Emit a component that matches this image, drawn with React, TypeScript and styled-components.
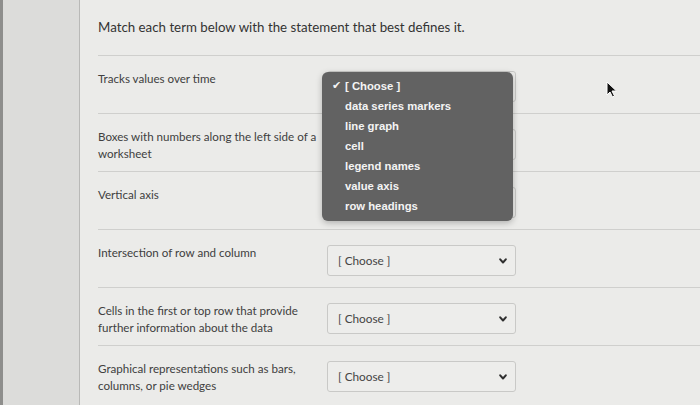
import React from 'react';
import styled, {createGlobalStyle} from 'styled-components';

const GlobalStyle = createGlobalStyle`
  html, body {
    margin: 0;
    padding: 0;
    background: #dcdcda;
    font-family: Lato, "Open Sans", sans-serif;
  }
`;

const Page = styled.div`
  position: relative;
  display: flex;
  width: 700px;
  height: 405px;
  overflow: hidden;
`;

const Sidebar = styled.div`
  width: 76px;
  flex-shrink: 0;
  background: #dcdcda;
  border-left: 3px solid #8e8e8c;
  border-right: 1px solid #b9b9b7;
`;

const Panel = styled.div`
  flex: 1;
  background: #ebebe9;
  padding-left: 18px;
`;

const Title = styled.div`
  height: 55px;
  box-sizing: border-box;
  padding-top: 19px;
  font-size: 13.3px;
  color: #333;
`;

const Row = styled.div`
  display: grid;
  grid-template-columns: 224px 189px;
  column-gap: 5px;
  align-items: start;
  box-sizing: border-box;
  height: 58px;
  padding-top: 14px;
  border-top: 1px solid #cfcfcd;
`;

const Label = styled.div`
  font-size: 11.6px;
  line-height: 17px;
  color: #404040;
`;

const SelectBox = styled.div`
  position: relative;
  display: flex;
  align-items: center;
  justify-content: space-between;
  box-sizing: border-box;
  height: 31px;
  margin-top: 1px;
  padding: 0 8px 0 10px;
  border: 1px solid #c9c9c7;
  border-radius: 3px;
  background: #ededeb;
  font-size: 11.8px;
  color: #454545;
`;

const Popup = styled.div`
  position: absolute;
  left: -6px;
  top: 0;
  width: 191px;
  box-sizing: border-box;
  padding: 4px 0 5px;
  background: #626262;
  border-radius: 6px;
  box-shadow: 0 2px 6px rgba(0, 0, 0, 0.25);
  z-index: 2;
`;

const Option = styled.div`
  position: relative;
  height: 20px;
  line-height: 20px;
  padding-left: 23px;
  font-family: "Liberation Sans", Arial, sans-serif;
  font-weight: bold;
  font-size: 11.3px;
  color: #f4f4f4;
`;

const Check = styled.span`
  position: absolute;
  left: 10px;
  top: 0;
  font-family: "DejaVu Sans", sans-serif;
  font-size: 11px;
`;

const Cursor = styled.svg`
  position: absolute;
  left: 606px;
  top: 81px;
`;

function Chevron() {
    return (
        <svg width="8" height="6" viewBox="0 0 8 6">
            <polyline points="1.2,1.3 4,4.5 6.8,1.3" fill="none" stroke="#2f2f2f" strokeWidth="2"
                      strokeLinecap="round" strokeLinejoin="round"/>
        </svg>
    );
}

const options = ['data series markers', 'line graph', 'cell', 'legend names', 'value axis', 'row headings'];

const rows = [
    'Tracks values over time',
    'Boxes with numbers along the left side of a worksheet',
    'Vertical axis',
    'Intersection of row and column',
    'Cells in the first or top row that provide further information about the data',
    'Graphical representations such as bars, columns, or pie wedges',
];

export default function App() {
    return (
        <Page>
            <GlobalStyle/>
            <Sidebar/>
            <Panel>
                <Title>Match each term below with the statement that best defines it.</Title>
                {rows.map((text, i) =>
                    <Row key={text}>
                        <Label>{text}</Label>
                        <SelectBox>
                            {/* the open list covers the first three selects */}
                            {i > 2 ? '[ Choose ]' : ''}
                            <Chevron/>
                            {i === 0 && <Popup>
                                <Option><Check>✔</Check>[ Choose ]</Option>
                                {options.map(o => <Option key={o}>{o}</Option>)}
                            </Popup>}
                        </SelectBox>
                    </Row>
                )}
            </Panel>
            <Cursor width="12" height="17" viewBox="0 0 12 17">
                <path d="M1 1 L1 14 L4 11 L6.5 16 L8.5 15 L6 10 L10.5 10 Z" fill="#111" stroke="#fff" strokeWidth="1"/>
            </Cursor>
        </Page>
    );
}
